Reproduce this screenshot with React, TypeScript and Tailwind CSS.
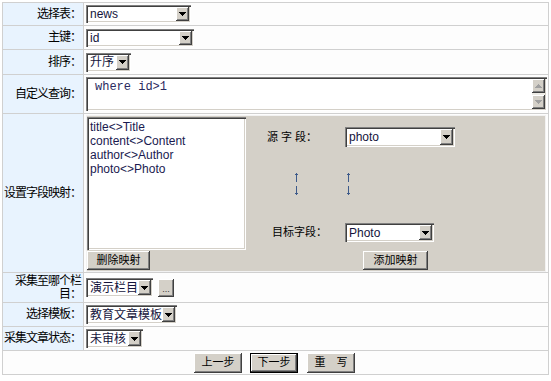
import type { ReactNode } from 'react';

// classic win9x bevels
const sunken = 'shadow-[inset_1px_1px_0_#808080,inset_2px_2px_0_#404040,inset_-1px_-1px_0_#ffffff,inset_-2px_-2px_0_#d4d0c8]';
const raised = 'shadow-[inset_-1px_-1px_0_#404040,inset_1px_1px_0_#ffffff,inset_-2px_-2px_0_#808080,inset_2px_2px_0_#d4d0c8]';

function DownTri({ fill = '#000' }: { fill?: string }) {
  return (
    <svg width="7" height="4" viewBox="0 0 7 4" shapeRendering="crispEdges">
      <path d="M0 0h7v1H0zM1 1h5v1H1zM2 2h3v1H2zM3 3h1v1H3z" fill={fill} />
    </svg>
  );
}

function UpTri({ fill = '#000' }: { fill?: string }) {
  return (
    <svg width="7" height="4" viewBox="0 0 7 4" shapeRendering="crispEdges">
      <path d="M3 0h1v1H3zM2 1h3v1H2zM1 2h5v1H1zM0 3h7v1H0z" fill={fill} />
    </svg>
  );
}

function Select({ className, children }: { className: string; children: ReactNode }) {
  return (
    <div className={`flex shrink-0 bg-white p-[2px] ${sunken} ${className}`}>
      <span className="flex-1 min-w-0 overflow-hidden whitespace-nowrap flex items-center pl-[2px] text-[12px] leading-none text-[#14143c]">
        {children}
      </span>
      <span className={`w-[13px] shrink-0 bg-[#d4d0c8] flex items-center justify-center ${raised}`}>
        <DownTri />
      </span>
    </div>
  );
}

function Btn({ className, children }: { className: string; children: ReactNode }) {
  return (
    <span className={`inline-flex shrink-0 items-center justify-center bg-[#d4d0c8] text-[11px] leading-none text-black ${raised} ${className}`}>
      {children}
    </span>
  );
}

function Label({ className, children }: { className: string; children: ReactNode }) {
  return (
    <div className={`bg-[#e8f3fe] flex items-center justify-end pr-[2px] text-[12px] tracking-[-1px] leading-[13px] text-black ${className}`}>
      <span className="text-right">{children}</span>
    </div>
  );
}

function Cell({ children }: { children: ReactNode }) {
  return <div className="bg-[#fdfdfd] flex items-center pl-[2px]">{children}</div>;
}

function Arrows({ className }: { className: string }) {
  return (
    <svg className={className} width="5" height="23" viewBox="0 0 5 23" shapeRendering="crispEdges">
      <path d="M2 0h1v1H2zM1 1h3v1H1zM2 2h1v7H2zM2 13h1v7H2zM1 20h3v1H1zM2 21h1v1H2z" fill="#3d5a8a" />
    </svg>
  );
}

export default function App() {
  return (
    <div className="w-[551px] h-[381px] bg-white pl-[2px] pt-[2px] font-['Liberation_Sans','Noto_Sans_CJK_SC',sans-serif] text-black">
      <div className="w-[547px] bg-[#d0d0d0] p-px grid grid-cols-[80px_464px] gap-px">
        <Label className="h-[22px]">选择表：</Label>
        <Cell>
          <Select className="w-[105px] h-[18px]">news</Select>
        </Cell>

        <Label className="h-[23px]">主键：</Label>
        <Cell>
          <Select className="w-[108px] h-[18px]">id</Select>
        </Cell>

        <Label className="h-[24px]">排序：</Label>
        <Cell>
          <Select className="w-[45px] h-[19px]">升序</Select>
        </Cell>

        <Label className="h-[38px]">自定义查询：</Label>
        <Cell>
          <div className={`flex w-[461px] h-[34px] bg-white p-[2px] ${sunken}`}>
            <div className="flex-1 pl-[7px] pt-[1px] font-['Liberation_Mono',monospace] text-[12px] leading-[14px] text-[#2a2a5e] whitespace-pre">
              where id&gt;1
            </div>
            <div className="w-[13px] flex flex-col bg-[#eeece6]">
              <span className={`h-[14px] bg-[#d4d0c8] flex items-center justify-center ${raised}`}>
                <UpTri fill="#a0a0a0" />
              </span>
              <span className="flex-1" />
              <span className={`h-[14px] bg-[#d4d0c8] flex items-center justify-center ${raised}`}>
                <DownTri fill="#a0a0a0" />
              </span>
            </div>
          </div>
        </Cell>

        <Label className="h-[158px]">设置字段映射：</Label>
        <div className="bg-[#fdfdfd] pl-[2px] pt-px">
          <div className="w-[460px] h-[157px] border border-[#f2f2f2] bg-[#d4d0c8] flex">
            <div className="w-[159px] flex flex-col gap-px pt-px">
              <div className={`h-[133px] bg-white p-[2px] ${sunken}`}>
                <div className="pl-px pt-px text-[12px] leading-[14px] text-[#1a1a50]">
                  <div>title&lt;&gt;Title</div>
                  <div>content&lt;&gt;Content</div>
                  <div>author&lt;&gt;Author</div>
                  <div>photo&lt;&gt;Photo</div>
                </div>
              </div>
              <Btn className="w-[63px] h-[19px]">删除映射</Btn>
            </div>

            <div className="flex-1 flex flex-col pt-[11px]">
              <div className="flex items-center h-[20px]">
                <span className="w-[99px] pl-[21px] text-[11px] leading-none">源 字 段：</span>
                <Select className="w-[110px] h-[20px]">photo</Select>
              </div>
              <div className="flex h-[23px] mt-[26px]">
                <Arrows className="ml-[48px]" />
                <Arrows className="ml-[47px]" />
              </div>
              <div className="flex items-center h-[19px] mt-[27px]">
                <span className="w-[99px] pl-[26px] text-[11px] leading-none">目标字段：</span>
                <Select className="w-[89px] h-[19px]">Photo</Select>
              </div>
              <div className="mt-[9px] pl-[117px] flex">
                <Btn className="w-[65px] h-[19px]">添加映射</Btn>
              </div>
            </div>
          </div>
        </div>

        <Label className="h-[29px]">采集至哪个栏目：</Label>
        <Cell>
          <Select className="w-[67px] h-[19px]">演示栏目</Select>
          <span className={`ml-[5px] w-[16px] h-[18px] bg-[#d4d0c8] flex items-end justify-center pb-[3px] text-[9px] leading-none text-[#333] ${raised}`}>
            ...
          </span>
        </Cell>

        <Label className="h-[23px]">选择模板：</Label>
        <Cell>
          <Select className="w-[91px] h-[19px]">教育文章模板</Select>
        </Cell>

        <Label className="h-[23px]">采集文章状态：</Label>
        <Cell>
          <Select className="w-[57px] h-[19px]">未审核</Select>
        </Cell>

        <div className="col-span-2 h-[23px] bg-[#fdfdfd] flex items-center justify-center pr-[2px]">
          <Btn className="w-[48px] h-[20px]">上一步</Btn>
          <span className="ml-[8px] flex border border-black">
            <Btn className="w-[46px] h-[18px]">下一步</Btn>
          </span>
          <Btn className="ml-[9px] w-[48px] h-[20px]">重　写</Btn>
        </div>
      </div>
    </div>
  );
}
